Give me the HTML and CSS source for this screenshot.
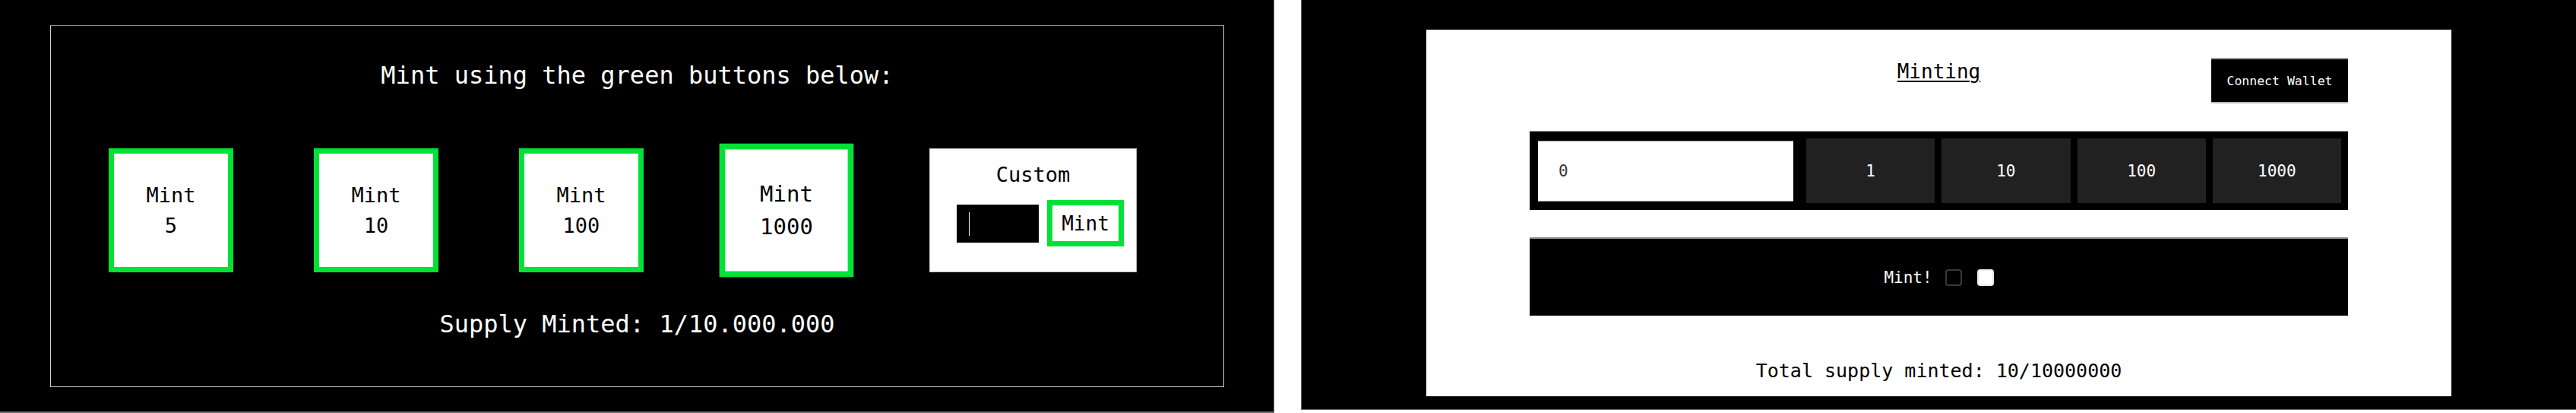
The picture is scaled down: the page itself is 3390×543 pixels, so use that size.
FILE: index.html
```html
<!DOCTYPE html>
<html lang="en">
<head>
<meta charset="utf-8">
<title>Mint</title>
<link rel="stylesheet" href="styles.css">
</head>
<body>
<div class="page">
  <section class="panel panel-left">
    <div class="frame">
      <h1 class="title">Mint using the green buttons below:</h1>
      <div class="row">
        <button class="mint-btn">Mint<br>5</button>
        <button class="mint-btn">Mint<br>10</button>
        <button class="mint-btn">Mint<br>100</button>
        <button class="mint-btn is-hover">Mint<br>1000</button>
        <div class="custom">
          <div class="custom-title">Custom</div>
          <div class="custom-row">
            <span class="custom-input"><span class="caret"></span></span>
            <button class="mint-small">Mint</button>
          </div>
        </div>
      </div>
      <p class="supply">Supply Minted: 1/10.000.000</p>
    </div>
  </section>
  <div class="spacer"></div>
  <section class="panel panel-right">
    <div class="card">
      <div class="header">
        <h2 class="minting">Minting</h2>
        <button class="connect">Connect Wallet</button>
      </div>
      <div class="amount-bar">
        <div class="amount-input">0</div>
        <button class="amt">1</button>
        <button class="amt">10</button>
        <button class="amt">100</button>
        <button class="amt">1000</button>
      </div>
      <div class="mint-bar">
        <span class="mint-label">Mint!</span>
        <span class="cb"></span>
        <span class="cb cb-white"></span>
      </div>
      <p class="total">Total supply minted: 10/10000000</p>
    </div>
  </section>
</div>
</body>
</html>
```

FILE: styles.css
```css
* { box-sizing: border-box; }
html, body { margin: 0; padding: 0; background: #ffffff; }
body { font-family: "DejaVu Sans Mono", monospace; }
button { font-family: "DejaVu Sans Mono", monospace; cursor: pointer; }

.page {
  display: flex;
  align-items: flex-start;
  width: 3390px;
  height: 543px;
  overflow: hidden;
}

.panel { background: #000000; flex: none; }

.panel-left {
  width: 1677px;
  height: 543px;
  border-right: 1px solid #6f6f6f;
  border-bottom: 2px solid #6f6f6f;
  padding: 33px 0 0 66px;
}

.spacer { width: 35px; flex: none; }

.panel-right {
  width: 1678px;
  height: 539px;
  border-left: 1px solid #6f6f6f;
  border-bottom: 1px solid #6f6f6f;
  padding-top: 39px;
}

/* ---------- left ---------- */
.frame {
  width: 1545px;
  height: 476px;
  border: 1px solid #cfcfcf;
  border-top-color: #8a8a8a;
  padding-top: 47px;
  color: #ffffff;
}

.title {
  margin: 0;
  font-weight: normal;
  font-size: 32px;
  line-height: 36px;
  text-align: center;
}

.row {
  display: flex;
  align-items: flex-start;
  gap: 106px;
  margin: 78px 0 0 76px;
}

.mint-btn {
  width: 164px;
  height: 163px;
  border: 7px solid #00e236;
  background: #ffffff;
  color: #000000;
  font-size: 27px;
  line-height: 40px;
  padding: 0;
  flex: none;
}

.mint-btn.is-hover { transform: scale(1.075); }

.custom {
  width: 273px;
  height: 163px;
  background: #ffffff;
  border: 1px solid #bdbdbd;
  padding-top: 18px;
  color: #000000;
  flex: none;
}

.custom-title {
  font-size: 27px;
  line-height: 32px;
  text-align: center;
}

.custom-row {
  display: flex;
  align-items: center;
  gap: 11px;
  margin-top: 17px;
  padding-left: 35px;
}

.custom-input {
  position: relative;
  width: 108px;
  height: 50px;
  background: #000000;
  flex: none;
}

.caret {
  position: absolute;
  left: 16px;
  top: 10px;
  width: 1px;
  height: 31px;
  background: #ffffff;
}

.mint-small {
  width: 101px;
  height: 61px;
  border: 7px solid #00e236;
  background: #ffffff;
  color: #000000;
  font-size: 26px;
  padding: 0;
  flex: none;
}

.supply {
  margin: 50px 0 0;
  font-size: 32px;
  line-height: 36px;
  text-align: center;
}

/* ---------- right ---------- */
.card {
  width: 1349px;
  height: 482px;
  margin: 0 auto;
  background: #ffffff;
  padding: 37px 136px 0;
}

.header {
  display: grid;
  grid-template-columns: 1fr auto 1fr;
  align-items: start;
}

.minting {
  grid-column: 2;
  margin: 3px 0 0;
  font-weight: normal;
  font-size: 26px;
  line-height: 30px;
  text-decoration: underline;
  text-decoration-thickness: 2px;
  text-underline-offset: 3px;
  color: #000000;
}

.connect {
  grid-column: 3;
  justify-self: end;
  width: 180px;
  height: 60px;
  background: #000000;
  color: #ffffff;
  border: 0;
  border-top: 2px solid #9a9a9a;
  border-bottom: 2px solid #b5b5b5;
  font-size: 16.5px;
  padding: 0;
}

.amount-bar {
  display: flex;
  align-items: center;
  gap: 9px;
  height: 104px;
  margin-top: 36px;
  background: #000000;
  border-top: 1px solid #a0a0a0;
  padding: 0 9px 0 11px;
}

.amount-input {
  width: 336px;
  height: 80px;
  margin-right: 8px;
  background: #ffffff;
  border-top: 1px solid #9a9a9a;
  border-bottom: 1px solid #9a9a9a;
  padding-left: 27px;
  display: flex;
  align-items: center;
  font-size: 21px;
  color: #3a3a3a;
  flex: none;
}

.amt {
  flex: 1;
  height: 85px;
  background: #212121;
  color: #ffffff;
  border: 0;
  font-size: 21px;
  padding: 0;
}

.mint-bar {
  display: flex;
  align-items: center;
  justify-content: center;
  height: 103px;
  margin-top: 36px;
  background: #000000;
  border-top: 2px solid #8c8c8c;
  color: #ffffff;
  font-size: 21px;
}

.mint-label { margin-right: 17px; }

.cb {
  width: 22px;
  height: 22px;
  border: 2px solid #3a3a3a;
  border-radius: 4px;
  background: #000000;
}

.cb-white {
  margin-left: 20px;
  background: #ffffff;
  border-color: #e8e8e8;
}

.total {
  margin: 58px 0 0;
  font-size: 25px;
  line-height: 30px;
  text-align: center;
  color: #000000;
}
```
